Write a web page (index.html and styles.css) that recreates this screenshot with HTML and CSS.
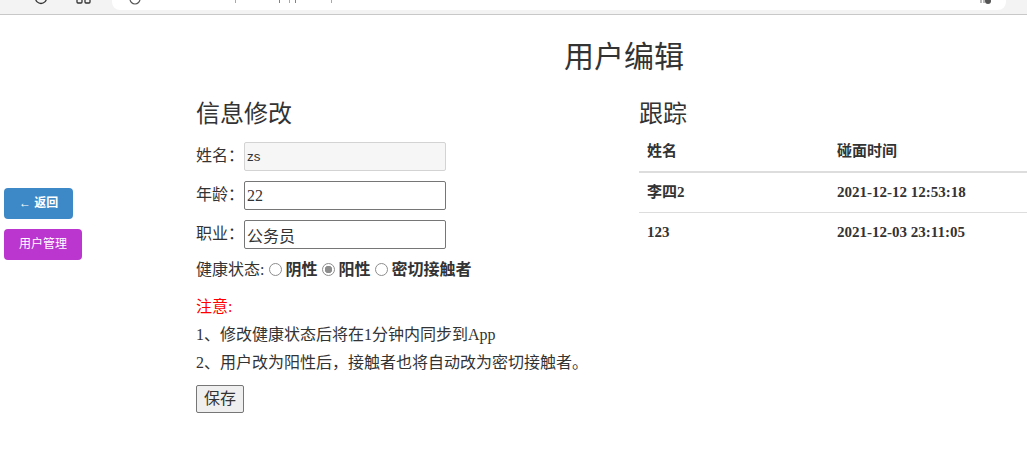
FILE: index.html
```html
<!DOCTYPE html>
<html lang="zh-CN">
<head>
    <meta charset="UTF-8">
    <title>用户编辑</title>
    <link rel="stylesheet" href="styles.css">
</head>
<body>
<!-- browser toolbar, cut off at the top -->
<div class="chrome">
    <svg class="ic ic-reload" width="14" height="14" viewBox="0 0 14 14"><circle cx="7" cy="-2" r="5.5" fill="none" stroke="#333" stroke-width="1.3"/></svg>
    <svg class="ic ic-tabs" width="16" height="14" viewBox="0 0 16 14"><rect x="1" y="-6" width="5" height="9" rx="1" fill="none" stroke="#333" stroke-width="1.3"/><rect x="9" y="-6" width="5" height="9" rx="1" fill="none" stroke="#333" stroke-width="1.3"/></svg>
    <div class="urlbar">
        <svg class="ic ic-info" width="12" height="10" viewBox="0 0 12 10"><circle cx="6" cy="-1" r="5" fill="none" stroke="#555" stroke-width="1.2"/></svg>
        <span class="tick o t1"></span><span class="tick b t2"></span><span class="tick o t3"></span><span class="tick b t4"></span><span class="tick o t5"></span>
        <svg class="ic ic-read" width="12" height="10" viewBox="0 0 12 10"><path d="M1 0v3M4 0v3" stroke="#777" stroke-width="1"/><circle cx="8" cy="1" r="3" fill="#555"/></svg>
    </div>
</div>

<div class="layout">
    <aside class="side">
        <a class="btn btn-back" href="#">&larr; 返回</a>
        <a class="btn btn-users" href="#">用户管理</a>
    </aside>

    <main class="main">
        <h2 class="page-title">用户编辑</h2>
        <div class="cols">
            <!-- 信息修改 -->
            <section class="edit">
                <h3>信息修改</h3>
                <div class="row">
                    <label for="name">姓名：</label>
                    <input id="name" class="field field-off" type="text" value="zs" disabled>
                </div>
                <div class="row">
                    <label for="age">年龄：</label>
                    <input id="age" class="field" type="text" value="22">
                </div>
                <div class="row">
                    <label for="job">职业：</label>
                    <input id="job" class="field" type="text" value="公务员">
                </div>
                <div class="status">健康状态:<input type="radio" name="st" disabled><b>阴性</b><input type="radio" name="st" checked disabled><b>阳性</b><input type="radio" name="st" disabled><b>密切接触者</b></div>
                <p class="note-head">注意:</p>
                <p class="note">1、修改健康状态后将在1分钟内同步到App</p>
                <p class="note">2、用户改为阳性后，接触者也将自动改为密切接触者。</p>
                <button class="save">保存</button>
            </section>

            <!-- 跟踪 -->
            <section class="track">
                <h3>跟踪</h3>
                <table class="table">
                    <thead>
                        <tr><th class="c-name">姓名</th><th>碰面时间</th></tr>
                    </thead>
                    <tbody>
                        <tr><td>李四2</td><td>2021-12-12 12:53:18</td></tr>
                        <tr><td>123</td><td>2021-12-03 23:11:05</td></tr>
                    </tbody>
                </table>
            </section>
        </div>
    </main>
</div>
</body>
</html>
```

FILE: styles.css
```css
html,body{margin:0;padding:0;overflow:hidden}
body{
    font-family:"Liberation Serif","Noto Sans CJK SC",serif;
    font-size:16px;line-height:1.42857;color:#333;background:#fff;
}
h2,h3{font-family:"Liberation Sans","Noto Sans CJK SC",sans-serif;font-weight:400;line-height:1.1;margin:0;color:#333}
h3{font-size:24px}

/* toolbar */
.chrome{height:14px;background:#f3f3f3;border-bottom:1px solid #c8c8c8;display:flex;align-items:flex-start;overflow:hidden}
.ic{display:block;flex:none}
.ic-reload{margin-left:34px}
.ic-tabs{margin-left:28px}
.urlbar{
    margin-left:20px;width:894px;height:10px;background:#fff;border-radius:0 0 8px 8px;
    display:flex;align-items:flex-start;position:relative;
}
.ic-info{margin-left:17px}
.tick{display:block;width:1px;height:3px;flex:none}
.tick.o{background:#e8a030}
.tick.b{background:#4a90d9}
.t1{margin-left:94px}
.t2{margin-left:43px}
.t3{margin-left:9px}
.t4{margin-left:5px}
.t5{margin-left:35px}
.ic-read{margin-left:auto;margin-right:14px}

/* page */
.layout{display:flex}
.side{width:192px;flex:none;padding:173px 0 0 4px;display:flex;flex-direction:column;align-items:flex-start;gap:10px}
.btn{
    display:inline-block;height:31px;line-height:31px;padding:0 14px;border-radius:4px;
    color:#fff;font-family:"Liberation Sans","Noto Sans CJK SC",sans-serif;font-size:12px;text-decoration:none;
}
.btn-back{background:#3d89c7;padding:0 15px;font-weight:700}
.btn-users{background:#bb35cf;padding:0 15px}

.main{width:856px;flex:none}
.page-title{text-align:center;font-size:30px;margin-top:25px}
.cols{display:grid;grid-template-columns:443px 1fr;margin-top:28px}

/* edit form */
.row{display:flex;align-items:center;height:29px;margin-top:10px}
.edit h3+.row{margin-top:15px}
.row label{width:48px;flex:none}
.field{
    box-sizing:border-box;width:202px;height:29px;padding:1px 2px;margin:0;
    border:1px solid #767676;border-radius:2px;font:inherit;color:#333;
}
.field-off{background:#f6f6f6;border-color:#d3d3d3;font-family:"Liberation Sans",sans-serif;font-size:13.33px}
.status{margin-top:10px;line-height:22px}
.status input{
    appearance:none;-webkit-appearance:none;box-sizing:border-box;
    width:13px;height:13px;margin:3px 3px 0 5px;vertical-align:-1px;
    border:1px solid #8d8d8d;border-radius:50%;background:#fff;
}
.status input:checked{background:radial-gradient(circle,#8d8d8d 0 3.5px,#fff 4px)}
.status b{font-weight:700}
.note-head{margin:15px 0 0;color:red;line-height:22px}
.note{margin:6px 0 0;line-height:22px}
.save{
    margin-top:11px;font:inherit;font-size:16px;line-height:20px;padding:3px 7px;
    background:#efefef;border:1px solid #767676;border-radius:2px;color:#333;
}

/* tracking table */
.table{border-collapse:collapse;width:100%;margin-top:5px;font-size:15px}
.table th,.table td{padding:8px;text-align:left;font-weight:700;line-height:23px}
.table th{border-bottom:2px solid #ddd}
.table tbody tr+tr td{border-top:1px solid #ddd}
.table tbody tr:first-child td{border-bottom:1px solid #ddd}
.c-name{width:174px}
```
